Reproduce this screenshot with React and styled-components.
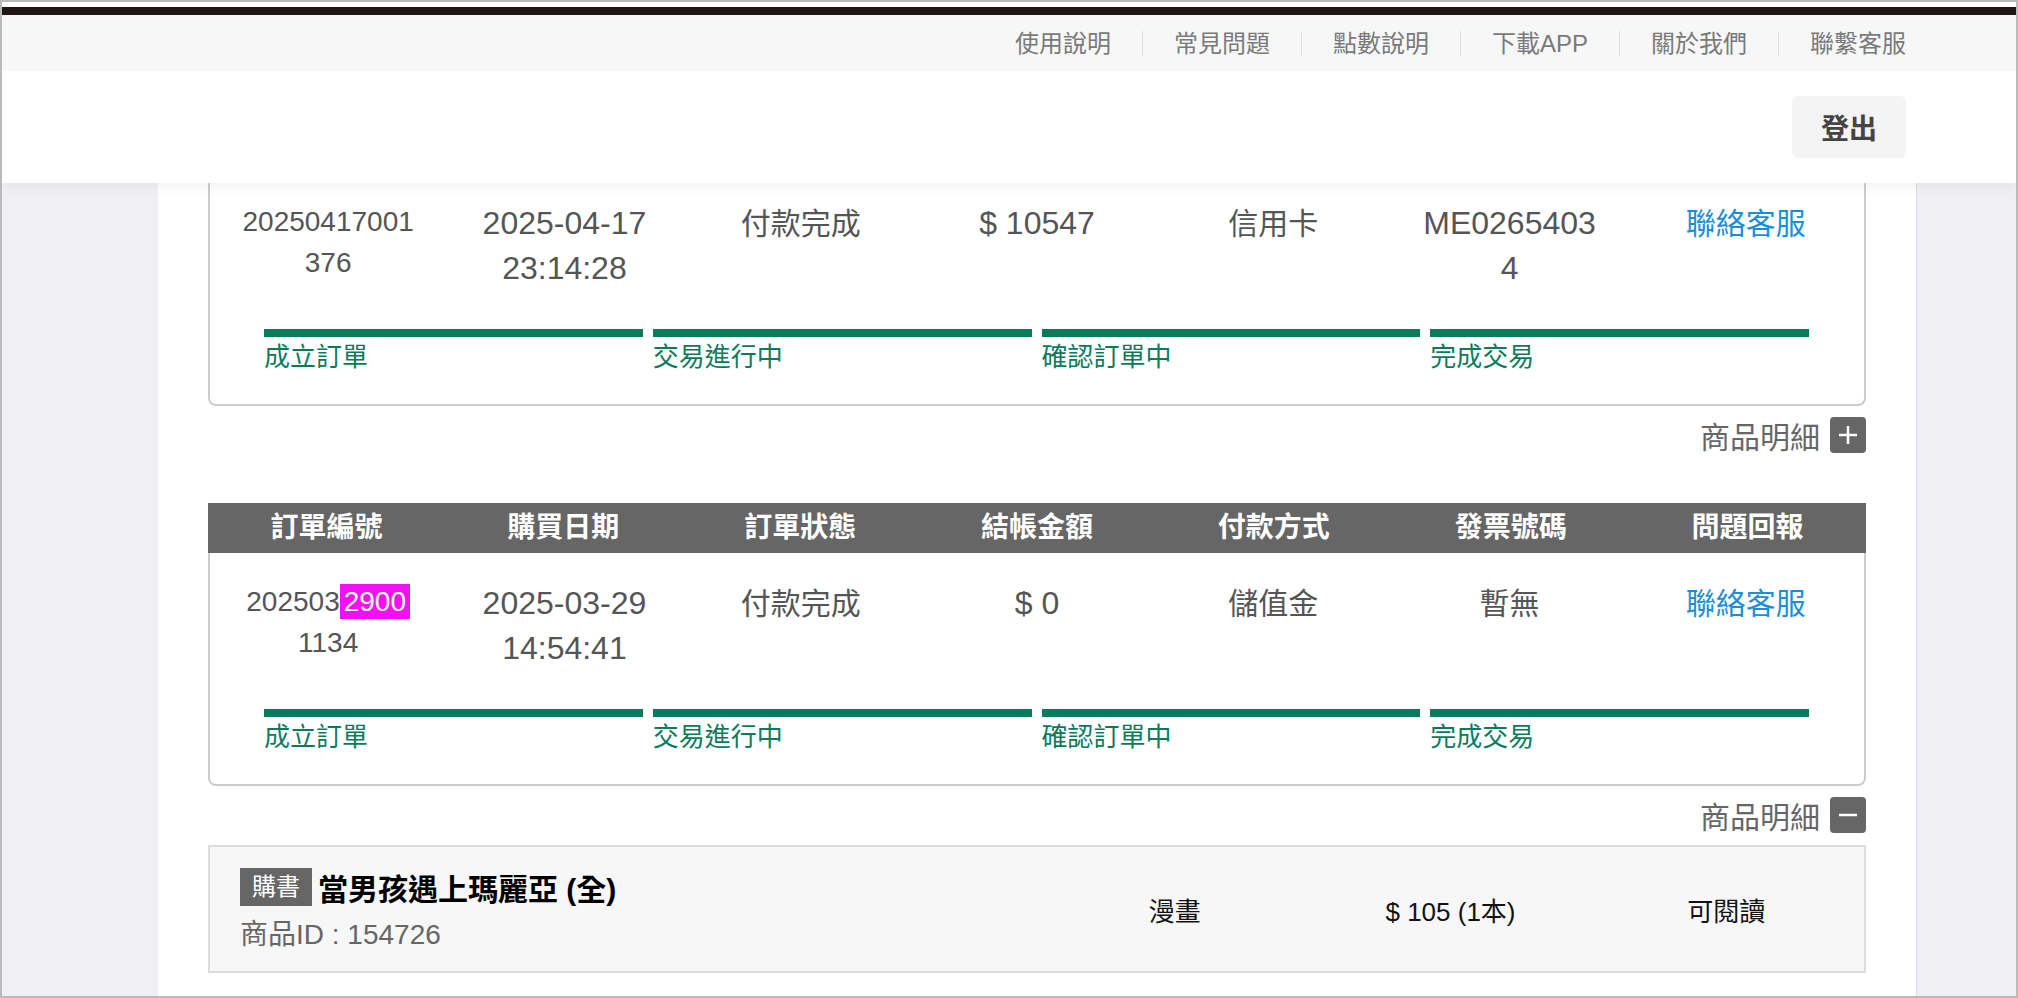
import React from 'react';
import styled, { createGlobalStyle } from 'styled-components';

const GlobalStyle = createGlobalStyle`
  html, body {
    margin: 0;
    padding: 0;
    background: #fff;
  }
  body {
    font-family: "Liberation Sans", "Noto Sans CJK TC", sans-serif;
  }
  * { box-sizing: border-box; }
`;

const navLinks = ['使用說明', '常見問題', '點數說明', '下載APP', '關於我們', '聯繫客服'];
const columns = ['訂單編號', '購買日期', '訂單狀態', '結帳金額', '付款方式', '發票號碼', '問題回報'];
const steps = ['成立訂單', '交易進行中', '確認訂單中', '完成交易'];

const orders = [
  {
    id: ['20250417001376'],
    date: '2025-04-17 23:14:28',
    status: '付款完成',
    amount: '$ 10547',
    method: '信用卡',
    invoice: 'ME02654034',
    open: false,
    items: [],
  },
  {
    id: ['202503', '2900', '1134'],
    date: '2025-03-29 14:54:41',
    status: '付款完成',
    amount: '$ 0',
    method: '儲值金',
    invoice: '暫無',
    open: true,
    items: [
      { tag: '購書', title: '當男孩遇上瑪麗亞 (全)', pid: '154726', type: '漫畫', price: '$ 105 (1本)', state: '可閱讀' },
    ],
  },
];

function App() {
  return (
    <Frame>
      <GlobalStyle />
      <Header>
        <Stripe />
        <NavBar>
          {navLinks.map(l => <NavItem key={l}>{l}</NavItem>)}
        </NavBar>
        <HeaderMain>
          <LogoutButton>登出</LogoutButton>
        </HeaderMain>
      </Header>

      <ScrollArea>
        <Main>
          <Orders>
            {orders.map((o, i) => (
              <div key={i}>
                <Card>
                  <TableHead>
                    {columns.map(c => <Th key={c}>{c}</Th>)}
                  </TableHead>
                  <DataRow>
                    <Cell $size={28} $lh={41} $max={175} $break>
                      {o.id[0]}
                      {o.id[1] && <Mark>{o.id[1]}</Mark>}
                      {o.id[2]}
                    </Cell>
                    <Cell $size={32}>{o.date}</Cell>
                    <Cell $size={30}>{o.status}</Cell>
                    <Cell $size={32}>{o.amount}</Cell>
                    <Cell $size={30}>{o.method}</Cell>
                    <Cell $size={o.invoice === '暫無' ? 30 : 32} $max={180} $break>{o.invoice}</Cell>
                    <Cell $size={30} $color="#1a8fd8">聯絡客服</Cell>
                  </DataRow>
                  <Progress>
                    {steps.map(s => (
                      <Step key={s}>
                        <Bar />
                        <StepLabel>{s}</StepLabel>
                      </Step>
                    ))}
                  </Progress>
                </Card>

                <DetailToggle $open={o.open}>
                  商品明細
                  <ToggleBox>
                    <svg width="22" height="22" viewBox="0 0 22 22">
                      <line x1="2" y1="11" x2="20" y2="11" stroke="#fff" strokeWidth="2.5" />
                      {!o.open && <line x1="11" y1="2" x2="11" y2="20" stroke="#fff" strokeWidth="2.5" />}
                    </svg>
                  </ToggleBox>
                </DetailToggle>

                {o.open && o.items.map(it => (
                  <ProductRow key={it.pid}>
                    <ProductInfo>
                      <TitleLine>
                        <Tag>{it.tag}</Tag>
                        <Title>{it.title}</Title>
                      </TitleLine>
                      <ProductId>商品ID : {it.pid}</ProductId>
                    </ProductInfo>
                    <ProductCell>{it.type}</ProductCell>
                    <ProductCell>{it.price}</ProductCell>
                    <ProductCell>{it.state}</ProductCell>
                  </ProductRow>
                ))}
              </div>
            ))}
          </Orders>
        </Main>
      </ScrollArea>
    </Frame>
  );
}

const Frame = styled.div`
  width: 2018px;
  height: 998px;
  border: 2px solid #b9b9be;
  display: flex;
  flex-direction: column;
  overflow: hidden;
  background: #fff;
`;

const Header = styled.header`
  position: relative;
  z-index: 2;
  background: #fff;
  box-shadow: 0 3px 12px rgba(0, 0, 0, 0.06);
`;

const Stripe = styled.div`
  height: 8px;
  margin-top: 5px;
  background: #221515;
`;

const NavBar = styled.nav`
  height: 56px;
  background: #f7f7f7;
  display: flex;
  justify-content: flex-end;
  align-items: center;
  padding-right: 110px;
`;

const NavItem = styled.a`
  height: 25px;
  line-height: 25px;
  padding: 0 31px;
  font-size: 24px;
  color: #7a7a7a;
  display: flex;
  align-items: center;
  & + & { border-left: 1px solid #dedede; }
  &:last-child { padding-right: 0; }
`;

const HeaderMain = styled.div`
  height: 112px;
  display: flex;
  justify-content: flex-end;
  align-items: center;
  padding-right: 110px;
`;

const LogoutButton = styled.button`
  height: 62px;
  padding: 0 29px;
  border: none;
  border-radius: 6px;
  background: #f4f4f4;
  color: #444;
  font-family: "Noto Sans CJK TC", sans-serif;
  font-size: 28px;
  font-weight: bold;
`;

const ScrollArea = styled.div`
  flex: 1;
  overflow: hidden;
  display: flex;
  background: #efeff4;
  padding-left: 156px;
`;

const Main = styled.main`
  width: 1759px;
  background: #fff;
  border-right: 1px solid #dcdce0;
  padding: 0 50px;
`;

const Orders = styled.div`
  margin-top: -60px;
`;

const Card = styled.div`
  border: 2px solid #cccccc;
  border-top: 0;
  border-radius: 0 0 8px 8px;
`;

const TableHead = styled.div`
  display: grid;
  grid-template-columns: repeat(7, 1fr);
  height: 50px;
  margin: 0 -2px;
  background: #666;
  align-items: center;
`;

const Th = styled.div`
  text-align: center;
  color: #fff;
  font-size: 28px;
  font-weight: bold;
  line-height: 50px;
`;

const DataRow = styled.div`
  display: grid;
  grid-template-columns: repeat(7, 1fr);
  align-items: start;
  padding-top: 28px;
  height: 118px;
`;

const Cell = styled.div`
  text-align: center;
  color: ${p => p.$color || '#555'};
  font-size: ${p => p.$size}px;
  line-height: ${p => p.$lh || 45}px;
  max-width: ${p => (p.$max ? `${p.$max}px` : 'none')};
  margin: 0 auto;
  word-break: ${p => (p.$break ? 'break-all' : 'normal')};
`;

const Mark = styled.mark`
  background: #f012f0;
  color: #fff;
  padding: 2px 4px;
`;

const Progress = styled.div`
  display: grid;
  grid-template-columns: repeat(4, 1fr);
  gap: 10px;
  padding: 38px 55px 29px 54px;
`;

const Step = styled.div`
  display: flex;
  flex-direction: column;
`;

const Bar = styled.div`
  height: 8px;
  background: #097b5c;
`;

const StepLabel = styled.div`
  margin-top: 2px;
  font-size: 26px;
  line-height: 36px;
  color: #097b5c;
`;

const DetailToggle = styled.div`
  display: flex;
  justify-content: flex-end;
  align-items: center;
  gap: 10px;
  height: 36px;
  margin: 11px 0 ${p => (p.$open ? 12 : 50)}px;
  font-size: 30px;
  color: #666;
`;

const ToggleBox = styled.span`
  width: 36px;
  height: 36px;
  border-radius: 4px;
  background: #666;
  display: flex;
  align-items: center;
  justify-content: center;
`;

const ProductRow = styled.div`
  display: grid;
  grid-template-columns: repeat(6, 1fr);
  align-items: center;
  height: 128px;
  border: 2px solid #dddddd;
  background: #f7f7f7;
`;

const ProductInfo = styled.div`
  grid-column: span 3;
  padding-left: 30px;
`;

const TitleLine = styled.div`
  display: flex;
  align-items: center;
  gap: 6px;
`;

const Tag = styled.span`
  height: 38px;
  line-height: 38px;
  padding: 0 12px;
  background: #666;
  color: #fff;
  font-size: 24px;
`;

const Title = styled.span`
  font-size: 30px;
  font-weight: bold;
  color: #000;
`;

const ProductId = styled.div`
  margin-top: 8px;
  font-size: 28px;
  line-height: 36px;
  color: #666;
`;

const ProductCell = styled.div`
  text-align: center;
  font-size: 26px;
  color: #111;
`;

export default App;
